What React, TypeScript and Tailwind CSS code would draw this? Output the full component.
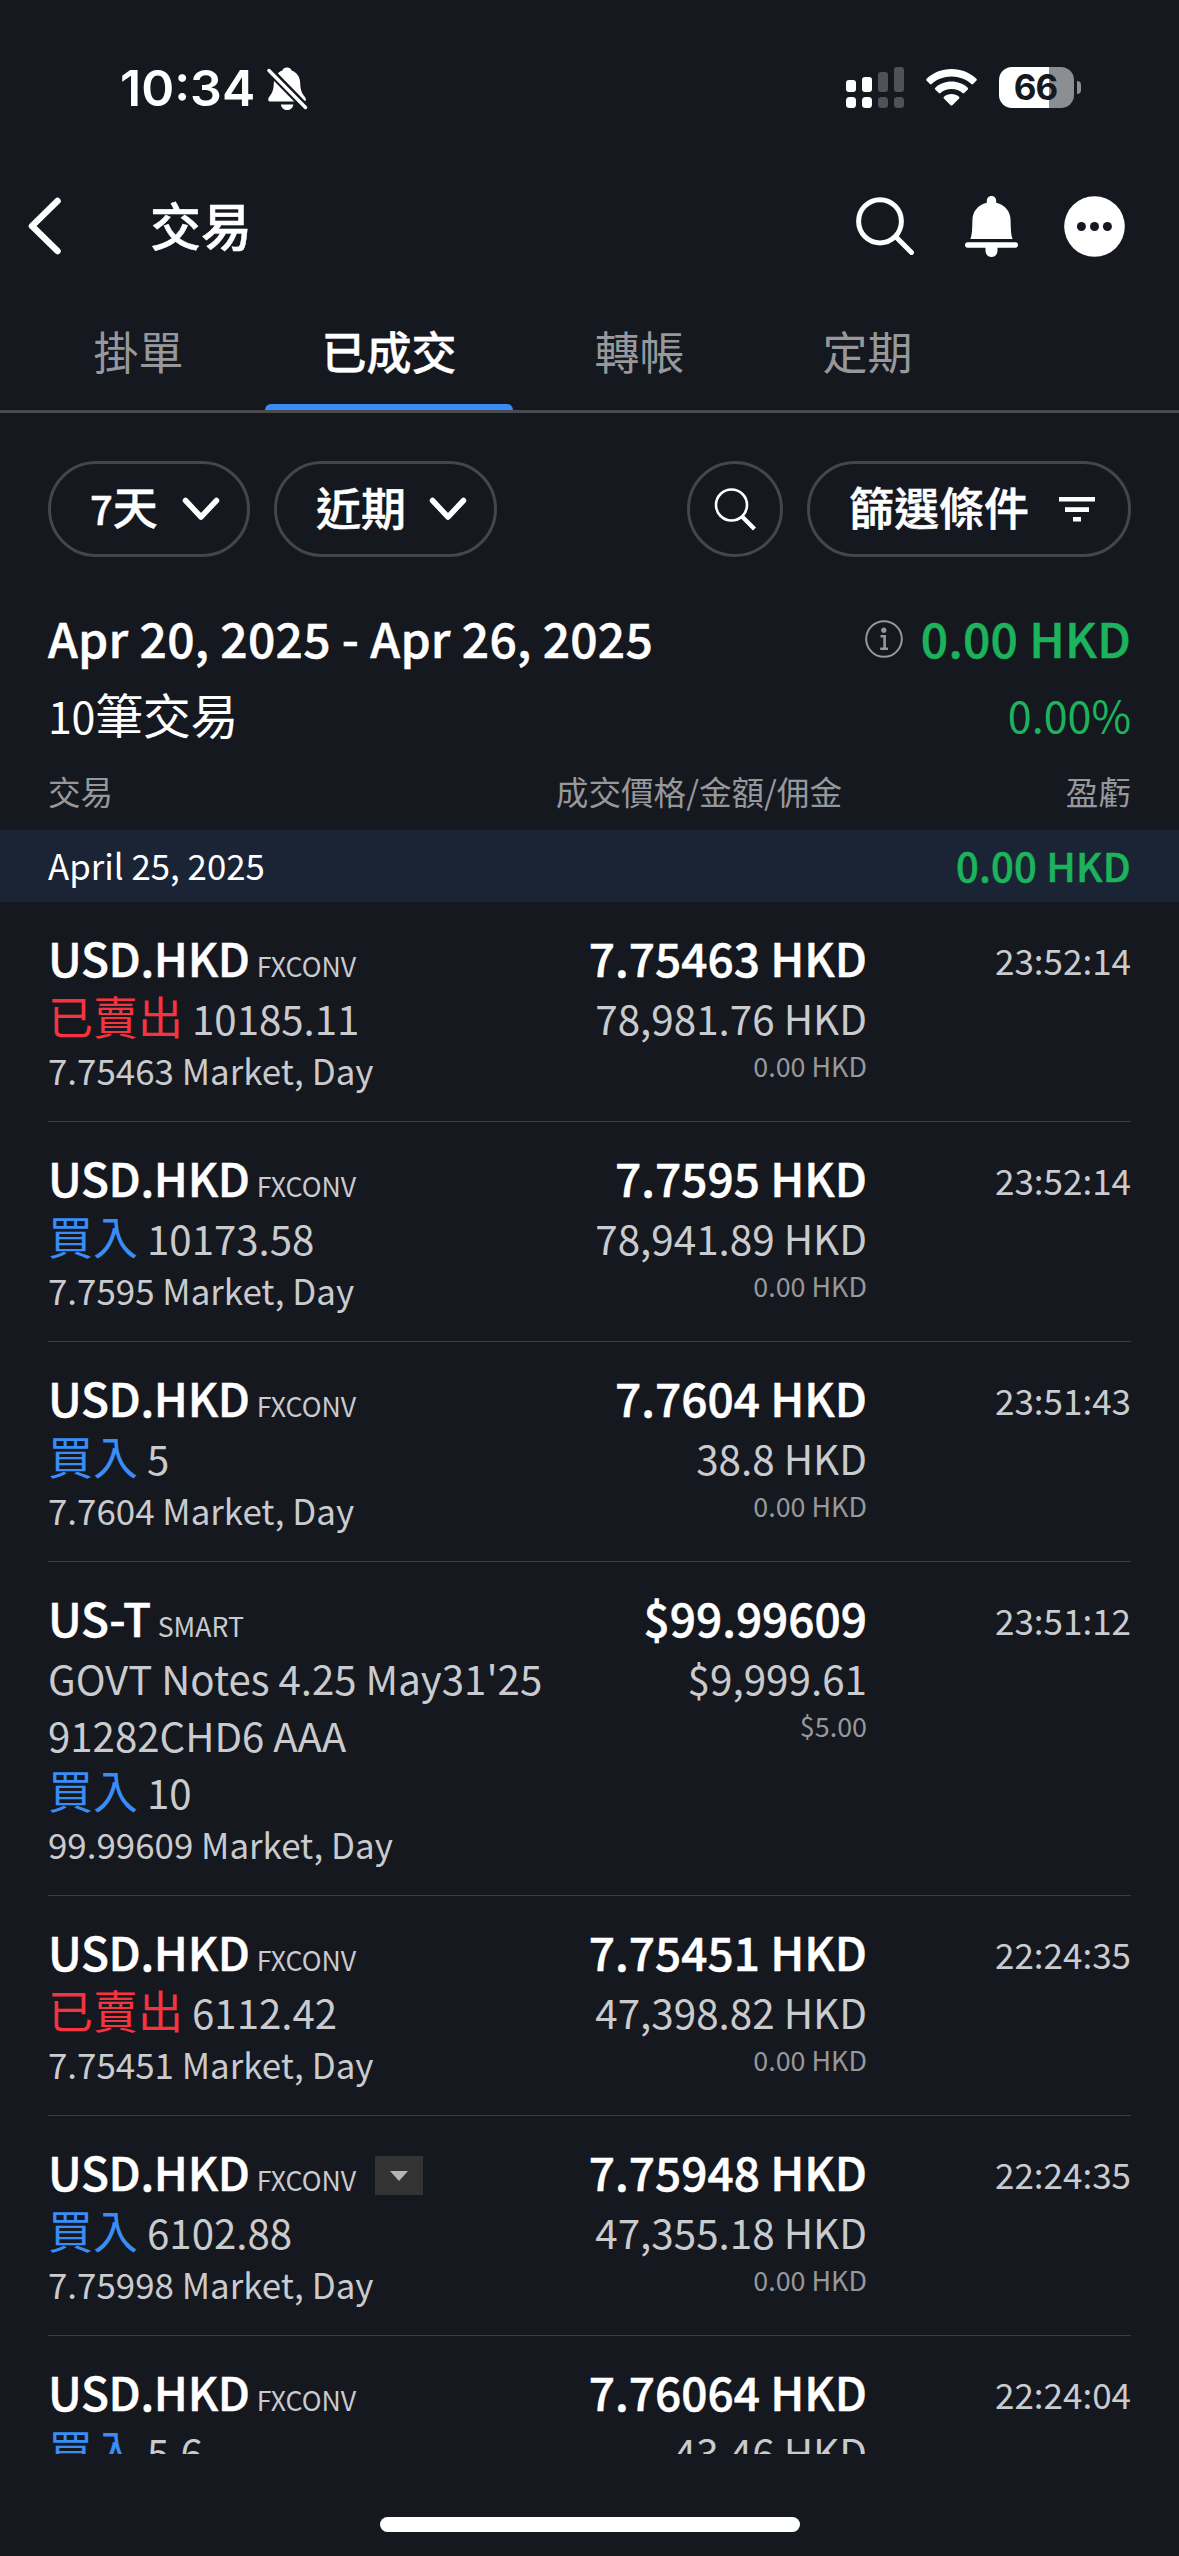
import clsx from 'clsx'

interface Trade {
    symbol: string
    exchange: string
    description?: string[]
    side: 'sell' | 'buy'
    quantity: string
    order: string
    price: string
    amount: string
    commission: string
    time: string
    expandable?: boolean
}

const tabs = ['掛單', '已成交', '轉帳', '定期']

const trades: Trade[] = [
    { symbol: 'USD.HKD', exchange: 'FXCONV', side: 'sell', quantity: '10185.11', order: '7.75463 Market, Day', price: '7.75463 HKD', amount: '78,981.76 HKD', commission: '0.00 HKD', time: '23:52:14' },
    { symbol: 'USD.HKD', exchange: 'FXCONV', side: 'buy', quantity: '10173.58', order: '7.7595 Market, Day', price: '7.7595 HKD', amount: '78,941.89 HKD', commission: '0.00 HKD', time: '23:52:14' },
    { symbol: 'USD.HKD', exchange: 'FXCONV', side: 'buy', quantity: '5', order: '7.7604 Market, Day', price: '7.7604 HKD', amount: '38.8 HKD', commission: '0.00 HKD', time: '23:51:43' },
    { symbol: 'US-T', exchange: 'SMART', description: ["GOVT Notes 4.25 May31'25", '91282CHD6 AAA'], side: 'buy', quantity: '10', order: '99.99609 Market, Day', price: '$99.99609', amount: '$9,999.61', commission: '$5.00', time: '23:51:12' },
    { symbol: 'USD.HKD', exchange: 'FXCONV', side: 'sell', quantity: '6112.42', order: '7.75451 Market, Day', price: '7.75451 HKD', amount: '47,398.82 HKD', commission: '0.00 HKD', time: '22:24:35' },
    { symbol: 'USD.HKD', exchange: 'FXCONV', side: 'buy', quantity: '6102.88', order: '7.75998 Market, Day', price: '7.75948 HKD', amount: '47,355.18 HKD', commission: '0.00 HKD', time: '22:24:35', expandable: true },
    { symbol: 'USD.HKD', exchange: 'FXCONV', side: 'buy', quantity: '5.6', order: '7.76064 Market, Day', price: '7.76064 HKD', amount: '43.46 HKD', commission: '0.00 HKD', time: '22:24:04' },
]

function StatusBar() {
    return (
        <div className="flex h-[175px] shrink-0 items-start justify-between pt-[67px] pr-[98px] pl-[120px]">
            <div className="flex items-start">
                <span className="font-['Inter',sans-serif] text-[50px] leading-[42px] font-semibold">10:34</span>
                <svg className="ml-[12px]" width="42" height="44" viewBox="0 0 42 44" fill="none">
                    <path d="M20 0.5C22.5 0.5 24 1.8 24.6 3.6C30 5.5 33 10 33.2 16C33.4 23 35 26.5 37.5 29.5C39.5 32 39.5 34.6 36.5 34.6H3.8C0.8 34.6 0.5 32 2.5 29.5C5 26.5 6.6 23 6.8 16C7 10 10 5.5 15.4 3.6C16 1.8 17.5 0.5 20 0.5Z" fill="white" />
                    <path d="M13.8 37.5H26.4C25.8 41 23.3 43 20.1 43C16.9 43 14.4 41 13.8 37.5Z" fill="white" />
                    <path d="M1 2L42 44" stroke="#15181f" strokeWidth="8" />
                    <path d="M2 3.5L38.5 40.5" stroke="white" strokeWidth="3.4" strokeLinecap="round" />
                </svg>
            </div>
            <div className="flex items-start">
                <svg width="58" height="42" viewBox="0 0 58 42" fill="white">
                    <rect x="0" y="13" width="10" height="12" rx="3" />
                    <rect x="16" y="10" width="10" height="15" rx="3" />
                    <rect x="32" y="5" width="10" height="20" rx="3" opacity="0.25" />
                    <rect x="48" y="0" width="10" height="25" rx="3" opacity="0.25" />
                    <rect x="0" y="30" width="10" height="11" rx="3.5" />
                    <rect x="16" y="30" width="10" height="11" rx="3.5" />
                    <rect x="32" y="30" width="10" height="11" rx="3.5" opacity="0.25" />
                    <rect x="48" y="30" width="10" height="11" rx="3.5" opacity="0.25" />
                </svg>
                <svg className="mt-[2px] ml-[22px]" width="51" height="37" viewBox="0 0 51 37" fill="white">
                    <path d="M25.5 0C35.2 0 44 3.6 50.4 9.8C51 10.4 51 11 50.5 11.6L47 15.1C46.5 15.6 45.9 15.6 45.3 15.1C40.2 10.4 33.2 7.6 25.5 7.6S10.8 10.4 5.7 15.1C5.1 15.6 4.5 15.6 4 15.1L0.5 11.6C0 11 0 10.4 0.6 9.8C7 3.6 15.8 0 25.5 0Z" />
                    <path d="M25.5 12.6C31.8 12.6 37.5 14.9 41.7 18.8C42.3 19.4 42.3 20 41.8 20.5L38.2 24C37.7 24.5 37.1 24.5 36.5 24C33.6 21.4 29.7 20 25.5 20S17.4 21.4 14.5 24C13.9 24.5 13.3 24.5 12.8 24L9.2 20.5C8.7 20 8.7 19.4 9.3 18.8C13.5 14.9 19.2 12.6 25.5 12.6Z" />
                    <path d="M25.5 25C28.4 25 31 26 33 27.7C33.6 28.2 33.6 28.9 33.1 29.4L26.6 36C25.9 36.7 25.1 36.7 24.4 36L17.9 29.4C17.4 28.9 17.4 28.2 18 27.7C20 26 22.6 25 25.5 25Z" />
                </svg>
                <div className="ml-[22px] flex h-[41px] w-[75px] items-center justify-center rounded-[13px] bg-[linear-gradient(90deg,#fff_67%,#8d8e92_67%)] pr-[2px] font-['Inter',sans-serif] text-[35px] leading-none font-bold tracking-[-1px] text-[#15181f]">
                    66
                </div>
                <div className="mt-[14px] ml-[3px] h-[13px] w-[4px] rounded-r-full bg-[#8d8e92]" />
            </div>
        </div>
    )
}

function Header() {
    return (
        <div className="flex h-[102px] shrink-0 items-center pr-[54px] pl-[28px]">
            <svg width="34" height="58" viewBox="0 0 34 58" fill="none" stroke="white" strokeWidth="6.5" strokeLinecap="round" strokeLinejoin="round">
                <path d="M29.5 4L4 29L29.5 54" />
            </svg>
            <h1 className="-mt-[4px] ml-[88px] text-[51px] leading-[60px] font-medium [-webkit-text-stroke:0.5px_currentColor]">交易</h1>
            <svg className="ml-auto" width="58" height="58" viewBox="0 0 58 58" fill="none" stroke="white" strokeWidth="5" strokeLinecap="round">
                <ellipse cx="24" cy="24.3" rx="21.4" ry="21.6" />
                <path d="M40 40L55.5 55.5" />
            </svg>
            <svg className="ml-[51px]" width="53" height="61" viewBox="0 0 53 61" fill="white">
                <path d="M26.5 0C29.5 0 31.2 2.2 31.2 5V6.8C40.5 9 45.4 16 45.6 24C45.8 34 46 39 47.6 43H5.4C7 39 7.2 34 7.4 24C7.6 16 12.5 9 21.8 6.8V5C21.8 2.2 23.5 0 26.5 0Z" />
                <rect x="0" y="46.3" width="53" height="5.4" rx="2.7" />
                <path d="M20.5 51H32.5V54.8C32.5 58.3 30 61 26.5 61S20.5 58.3 20.5 54.8Z" />
            </svg>
            <svg className="ml-[46px]" width="61" height="61" viewBox="0 0 61 61">
                <circle cx="30.5" cy="30.5" r="30.3" fill="white" />
                <g fill="#15181f">
                    <circle cx="17.4" cy="30.5" r="4.5" />
                    <circle cx="30.5" cy="30.5" r="4.5" />
                    <circle cx="43.4" cy="30.5" r="4.5" />
                </g>
            </svg>
        </div>
    )
}

function Tabs() {
    return (
        <div className="flex h-[136px] shrink-0 gap-[25px] border-b-[3px] border-[#4a4b4f] pl-[37px]">
            {
                tabs.map((tab) => {
                    const active = tab === '已成交'
                    return (
                        <div key={tab} className="flex flex-col justify-between">
                            <span className={clsx('mt-[44px] px-[56.5px] text-[45px] leading-[60px]', active ? 'font-medium text-white [-webkit-text-stroke:0.4px_currentColor]' : 'font-normal text-[#97989c]')}>{tab}</span>
                            {active && <div className="h-[6px] rounded-t-[8px] bg-[#3a8df5]" />}
                        </div>
                    )
                })
            }
        </div>
    )
}

function Chevron() {
    return (
        <svg width="38" height="24" viewBox="0 0 38 24" fill="none" stroke="white" strokeWidth="5.5" strokeLinecap="round" strokeLinejoin="round">
            <path d="M3.5 3.5L19 20L34.5 3.5" />
        </svg>
    )
}

function Filters() {
    return (
        <div className="mt-[48px] flex h-[96px] shrink-0 items-center px-[48px] text-[45px] leading-[60px] font-medium [-webkit-text-stroke:0.5px_currentColor]">
            <button className="flex h-full w-[202px] items-center justify-between rounded-full border-[3px] border-[#44464a] pr-[27px] pl-[39px]">
                <span className="-mt-[5px]"><span className="text-[40px]">7</span>天</span>
                <Chevron />
            </button>
            <button className="ml-[24px] flex h-full w-[223px] items-center justify-between rounded-full border-[3px] border-[#44464a] pr-[27px] pl-[39px]">
                <span className="-mt-[5px]">近期</span>
                <Chevron />
            </button>
            <button className="ml-auto flex h-full w-[96px] items-center justify-center rounded-full border-[3px] border-[#44464a]">
                <svg width="42" height="48" viewBox="0 0 42 48" fill="none" stroke="white">
                    <circle cx="17.5" cy="20" r="15.5" strokeWidth="2.6" />
                    <path d="M28 31.5L40.5 44" strokeWidth="4.2" />
                </svg>
            </button>
            <button className="ml-[24px] flex h-full w-[324px] items-center justify-between rounded-full border-[3px] border-[#44464a] pr-[33px] pl-[39px]">
                <span className="-mt-[5px]">篩選條件</span>
                <svg width="36" height="25" viewBox="0 0 36 25" fill="white">
                    <rect width="36" height="4.5" />
                    <rect x="6" y="10.2" width="24" height="4.8" />
                    <rect x="14" y="20" width="8" height="4.5" />
                </svg>
            </button>
        </div>
    )
}

function Summary() {
    return (
        <div className="shrink-0 px-[48px] pt-[45px]">
            <div className="flex h-[70px] items-center justify-between text-[48px] leading-[60px] font-medium tracking-[0.25px] [-webkit-text-stroke:0.5px_currentColor]">
                <h2>Apr 20, 2025 - Apr 26, 2025</h2>
                <div className="flex items-center text-[#1cb35c]">
                    <svg className="mt-[4px] mr-[18px]" width="38" height="38" viewBox="0 0 38 38" fill="none" stroke="#97989c">
                        <circle cx="19" cy="19" r="17.8" strokeWidth="2" />
                        <circle cx="18.8" cy="10.2" r="2.6" fill="#97989c" stroke="none" />
                        <path d="M15.5 16.2H19.6V28.5M15.2 28.8H23" strokeWidth="2.6" />
                    </svg>
                    <span>0.00 HKD</span>
                </div>
            </div>
            <div className="mt-[9px] flex h-[66px] items-center justify-between leading-[60px]">
                <span className="text-[48px] tracking-[-0.3px]"><span className="text-[43px]">10</span>筆交易</span>
                <span className="text-[43px] text-[#1cb35c]">0.00%</span>
            </div>
            <div className="flex h-[83px] items-center pt-[4px] text-[32.6px] leading-[40px] text-[#97989c]">
                <span className="w-[300px]">交易</span>
                <span className="w-[494px] text-right">成交價格/金額/佣金</span>
                <span className="ml-auto">盈虧</span>
            </div>
        </div>
    )
}

function TradeRow({ trade }: { trade: Trade }) {
    return (
        <div className="flex border-b border-[#393c42] pt-[26px] pb-[25px]">
            <div className="w-[520px] text-[#c9cbce]">
                <div className="flex h-[59px] items-baseline leading-[58px]">
                    <span className="text-[46px] font-medium tracking-[-0.3px] text-white [-webkit-text-stroke:0.5px_currentColor]">{trade.symbol}</span>
                    <span className="ml-[7px] text-[26.7px]">{trade.exchange}</span>
                    {trade.expandable && (
                        <span className="mt-[14px] ml-[19px] flex h-[39px] w-[48px] items-center justify-center self-start bg-[#333333]">
                            <svg width="18" height="10" viewBox="0 0 18 10" fill="#b4b5b6"><path d="M0 0H18L9 10Z" /></svg>
                        </span>
                    )}
                </div>
                {
                    trade.description?.map((line) => (
                        <div key={line} className="h-[57px] text-[45px] leading-[57px]">
                            <span className="text-[40.2px]">{line}</span>
                        </div>
                    ))
                }
                <div className="h-[57px] text-[45px] leading-[57px]">
                    <span className={trade.side === 'sell' ? 'text-[#f5343f]' : 'text-[#3a8df5]'}>{trade.side === 'sell' ? '已賣出' : '買入'}</span>
                    <span className="text-[40.2px]"> {trade.quantity}</span>
                </div>
                <div className="h-[52px] text-[34.9px] leading-[53px]">{trade.order}</div>
            </div>
            <div className="flex w-[299px] flex-col items-end text-[#c9cbce]">
                <span className="h-[58px] text-[46px] leading-[58px] font-medium whitespace-nowrap text-white [-webkit-text-stroke:0.5px_currentColor]">{trade.price}</span>
                <span className="h-[57px] text-[40.4px] leading-[64px] whitespace-nowrap">{trade.amount}</span>
                <span className="text-[26.9px] leading-[46px] text-[#97989c]">{trade.commission}</span>
            </div>
            <span className="ml-auto text-[35px] leading-[64px] text-[#c9cbce]">{trade.time}</span>
        </div>
    )
}

export default function App() {
    return (
        <div className="flex h-[2556px] w-[1179px] flex-col overflow-hidden bg-[#15181f] font-['Noto_Sans_CJK_TC',sans-serif] text-white">
            <StatusBar />
            <Header />
            <Tabs />
            <Filters />
            <Summary />
            <div className="flex h-[72px] shrink-0 items-center justify-between bg-[#1a2435] px-[48px] leading-[60px]">
                <span className="-mt-[2px] text-[34.8px]">April 25, 2025</span>
                <span className="-mt-[2px] text-[40px] font-medium tracking-[0.2px] text-[#1cb35c] [-webkit-text-stroke:0.5px_currentColor]">0.00 HKD</span>
            </div>
            <div className="h-[1552px] shrink-0 overflow-hidden px-[48px]">
                {
                    trades.map((trade, index) => (
                        <TradeRow key={index} trade={trade} />
                    ))
                }
            </div>
            <div className="mx-auto mt-[63px] h-[15px] w-[420px] shrink-0 rounded-full bg-white" />
        </div>
    )
}
